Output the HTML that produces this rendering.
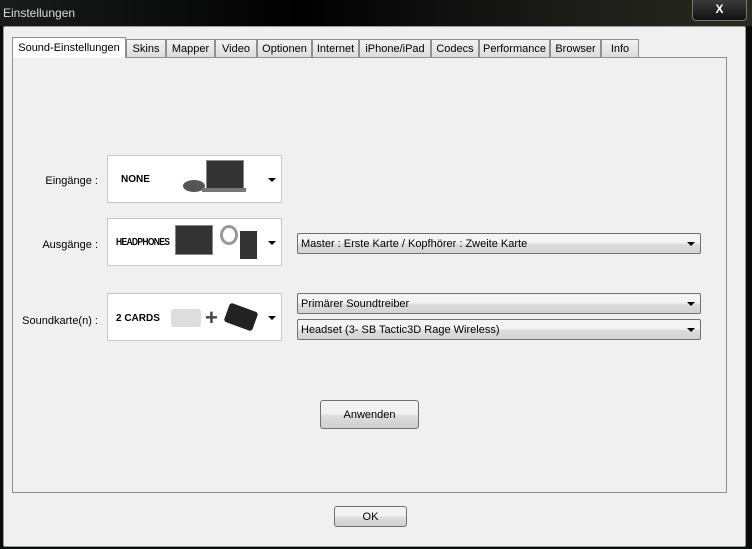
<!DOCTYPE html><html><head><style>
body{margin:0;width:752px;height:549px;background:#0a0c0c;position:relative;overflow:hidden;font-family:"Liberation Sans",sans-serif;font-size:11px;color:#000}
.a{position:absolute}
.tabs div{position:absolute;top:39px;height:18px;border:1px solid #8e8f8f;border-bottom:none;background:linear-gradient(#f2f2f2,#dcdcdc);box-sizing:border-box;text-align:center;line-height:18px;font-size:11px}
.box{position:absolute;left:107px;width:175px;height:48px;background:#fff;border:1px solid #c8c8c8;box-sizing:border-box;font-weight:bold}
.dd{position:absolute;left:297px;width:404px;height:21px;border:1px solid #707070;border-radius:2px;box-sizing:border-box;background:linear-gradient(#f4f4f4 45%,#dcdcdc 55%,#d4d4d4);padding-left:3px;line-height:21px}
.arr{position:absolute;right:5px;top:8px;border-left:4px solid transparent;border-right:4px solid transparent;border-top:4px solid #000}
.btn{position:absolute;border:1px solid #707070;border-radius:3px;box-sizing:border-box;background:linear-gradient(#f2f2f2 45%,#dddddd 55%,#cfcfcf);text-align:center}
.lbl{position:absolute;text-align:right;width:90px;left:8px}
</style></head><body>
<div class="a" style="left:0;top:0;width:752px;height:26px;background:linear-gradient(90deg,#1a1c1c,#000 40%,#111 60%,#2a2a22)"></div>
<div class="a" style="left:3px;top:6px;color:#ddd;font-size:12px">Einstellungen</div>
<div class="a" style="left:692px;top:0;width:53px;height:20px;border:1px solid #777;border-top:none;border-radius:0 0 4px 4px;background:linear-gradient(#3a3a3a,#111);color:#fff;font-weight:bold;text-align:center;line-height:18px;font-size:12px">X</div>
<div class="a" style="left:3px;top:26px;width:741px;height:519px;background:#f0f0f0;border:1px solid #999;border-radius:2px"></div>
<div class="a" style="left:12px;top:57px;width:715px;height:436px;border:1px solid #8e8f8f;box-sizing:border-box;background:#f0f0f0"></div>
<div class="tabs">
<div style="left:12px;width:114px;top:37px;height:21px;background:#fff;line-height:20px">Sound-Einstellungen</div>
<div style="left:126px;width:40px">Skins</div>
<div style="left:166px;width:49px">Mapper</div>
<div style="left:215px;width:42px">Video</div>
<div style="left:257px;width:55px">Optionen</div>
<div style="left:312px;width:47px">Internet</div>
<div style="left:359px;width:72px">iPhone/iPad</div>
<div style="left:431px;width:48px">Codecs</div>
<div style="left:479px;width:71px">Performance</div>
<div style="left:550px;width:51px">Browser</div>
<div style="left:601px;width:38px">Info</div>
</div>
<div class="lbl" style="top:175px">Eingänge :</div>
<div class="lbl" style="top:239px">Ausgänge :</div>
<div class="lbl" style="top:315px">Soundkarte(n) :</div>
<div class="box" style="top:155px"><span class="a" style="left:13px;top:18px;font-size:10px">NONE</span>
<div class="a" style="left:75px;top:24px;width:22px;height:12px;border-radius:50%;background:#555"></div>
<div class="a" style="left:98px;top:4px;width:36px;height:28px;background:#333;border:1px solid #888"></div>
<div class="a" style="left:94px;top:32px;width:44px;height:4px;background:#777"></div>
<div class="arr" style="top:22px"></div></div>
<div class="box" style="top:218px"><span class="a" style="left:8px;top:18px;font-size:10px;letter-spacing:-0.8px;transform:scaleX(0.85);transform-origin:left">HEADPHONES</span>
<div class="a" style="left:67px;top:6px;width:36px;height:28px;background:#333;border:1px solid #888"></div>
<div class="a" style="left:112px;top:6px;width:18px;height:20px;border:3px solid #999;border-radius:50%;box-sizing:border-box"></div>
<div class="a" style="left:132px;top:12px;width:17px;height:28px;background:#333"></div>
<div class="arr" style="top:22px"></div></div>
<div class="box" style="top:293px"><span class="a" style="left:8px;top:19px;font-size:10px">2 CARDS</span>
<div class="a" style="left:63px;top:15px;width:30px;height:18px;background:#ddd;border-radius:3px"></div>
<div class="a" style="left:97px;top:14px;font-size:22px;line-height:20px;color:#444">+</div>
<div class="a" style="left:118px;top:13px;width:30px;height:20px;background:#222;border-radius:3px;transform:rotate(20deg)"></div>
<div class="arr" style="top:22px"></div></div>
<div class="dd" style="top:233px">Master : Erste Karte / Kopfhörer : Zweite Karte<div class="arr"></div></div>
<div class="dd" style="top:293px">Primärer Soundtreiber<div class="arr"></div></div>
<div class="dd" style="top:319px">Headset (3- SB Tactic3D Rage Wireless)<div class="arr"></div></div>
<div class="btn" style="left:320px;top:400px;width:99px;height:29px;line-height:28px">Anwenden</div>
<div class="btn" style="left:334px;top:506px;width:73px;height:21px;line-height:20px">OK</div>
</body></html>
